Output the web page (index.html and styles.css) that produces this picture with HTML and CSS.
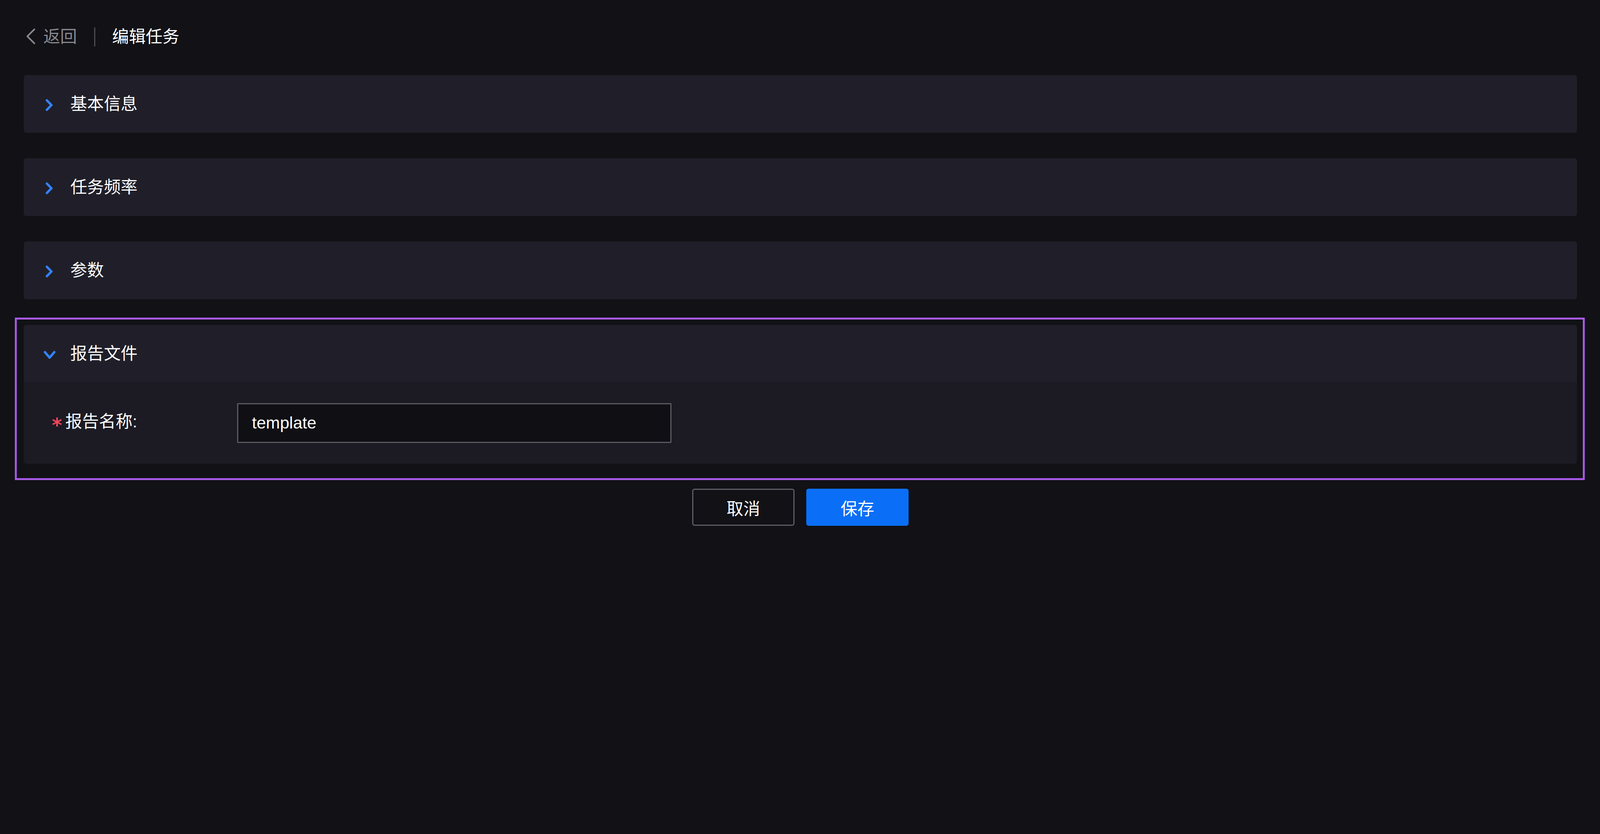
FILE: index.html
```html
<!DOCTYPE html>
<html>
<head>
  <title>编辑任务</title>
  <link rel="stylesheet" href="styles.css">
</head>
<body>

<div class="page">
  <div class="topbar">
    <a class="back">
      <svg class="back-icon" width="26" height="44" viewBox="0 0 26 44">
        <polyline points="23,3 5,21 23,39" />
      </svg>
      返回
    </a>
    <span class="divider"></span>
    <span class="page-title">编辑任务</span>
  </div>

  <div class="panel">
    <div class="panel-head">
      <svg class="arrow" width="34" height="36" viewBox="0 0 34 36">
        <polyline points="11,5 22.7,17 11,29" />
      </svg>
      基本信息
    </div>
  </div>

  <div class="panel">
    <div class="panel-head">
      <svg class="arrow" width="34" height="36" viewBox="0 0 34 36">
        <polyline points="11,5 22.7,17 11,29" />
      </svg>
      任务频率
    </div>
  </div>

  <div class="panel">
    <div class="panel-head">
      <svg class="arrow" width="34" height="36" viewBox="0 0 34 36">
        <polyline points="11,5 22.7,17 11,29" />
      </svg>
      参数
    </div>
  </div>

  <div class="panel-focus">
    <div class="panel open">
      <div class="panel-head">
        <svg class="arrow" width="34" height="36" viewBox="0 0 34 36">
          <polyline points="6,10.5 18,24.5 30,10.5" />
        </svg>
        报告文件
      </div>
      <div class="panel-body">
        <div class="form-row">
          <label class="form-label"><span class="required">*</span>报告名称:</label>
          <input class="text-input" type="text" value="template">
        </div>
      </div>
    </div>
  </div>

  <div class="actions">
    <button class="btn">取消</button>
    <button class="btn btn-primary">保存</button>
  </div>
</div>

</body>
</html>
```

FILE: styles.css
```css
body {
  margin: 0;
  background-color: #111116;
  color: #ffffff;
  font-family: "Liberation Sans", "Noto Sans CJK SC", sans-serif;
  font-size: 43px;
}

.page {
  padding: 0 59px 0 61px;
}

/* top bar */

.topbar {
  height: 188px;
  margin-bottom: 4px;
  display: flex;
  align-items: center;
}

.back {
  display: flex;
  align-items: center;
  color: #88888e;
  line-height: 50px;
  cursor: pointer;
}

.back-icon {
  margin-left: 4px;
  margin-right: 20px;
}

.back-icon polyline {
  fill: none;
  stroke: #88888e;
  stroke-width: 4;
  stroke-linecap: round;
  stroke-linejoin: round;
}

.divider {
  width: 3px;
  height: 49px;
  background: #4a4a52;
  margin: 0 43px 0 44px;
}

.page-title {
  line-height: 50px;
  color: #ffffff;
}

/* collapse panels */

.panel {
  background: #201f29;
  border-radius: 6px;
  margin-bottom: 65px;
}

.panel-head {
  height: 148px;
  display: flex;
  align-items: center;
  padding-left: 48px;
  line-height: 50px;
}

.arrow {
  margin-right: 37px;
  margin-top: 7px;
}

.arrow polyline {
  fill: none;
  stroke: #3283f6;
  stroke-width: 6;
  stroke-linecap: round;
  stroke-linejoin: round;
}

.panel-focus {
  margin: -18px -20px 0 -23px;
  padding: 14px 15px 37px 18px;
  border: 5px solid #a858e4;
}

.panel.open {
  margin-bottom: 0;
  background: #1c1b24;
}

.panel.open .panel-head {
  background: #201f29;
  border-radius: 6px 6px 0 0;
  height: 146px;
}

.panel-body {
  height: 209px;
  display: flex;
  align-items: center;
  padding-left: 72px;
}

/* form */

.form-row {
  display: flex;
  align-items: center;
}

.form-label {
  width: 474px;
  display: flex;
  align-items: center;
  line-height: 50px;
  margin-top: -8px;
}

.required {
  color: #f5465a;
  font-family: "DejaVu Sans", sans-serif;
  font-weight: bold;
  font-size: 50px;
  line-height: 1;
  padding-top: 20px;
  margin-right: 8px;
}

.text-input {
  box-sizing: border-box;
  width: 1112px;
  height: 102px;
  border: 3px solid #5a5963;
  border-radius: 2px;
  background: #0f0f14;
  color: #ffffff;
  font-family: "Liberation Sans", "Noto Sans CJK SC", sans-serif;
  font-size: 43px;
  padding: 0 35px;
  outline: none;
}

/* footer buttons */

.actions {
  display: flex;
  justify-content: center;
  gap: 30px;
  margin-top: 22px;
}

.btn {
  box-sizing: border-box;
  width: 262px;
  height: 95px;
  border: 3px solid #5c5c66;
  border-radius: 6px;
  background: transparent;
  color: #ffffff;
  font-family: "Liberation Sans", "Noto Sans CJK SC", sans-serif;
  font-size: 43px;
  cursor: pointer;
}

.btn-primary {
  background: #0a6ff6;
  border-color: #0a6ff6;
}
```
